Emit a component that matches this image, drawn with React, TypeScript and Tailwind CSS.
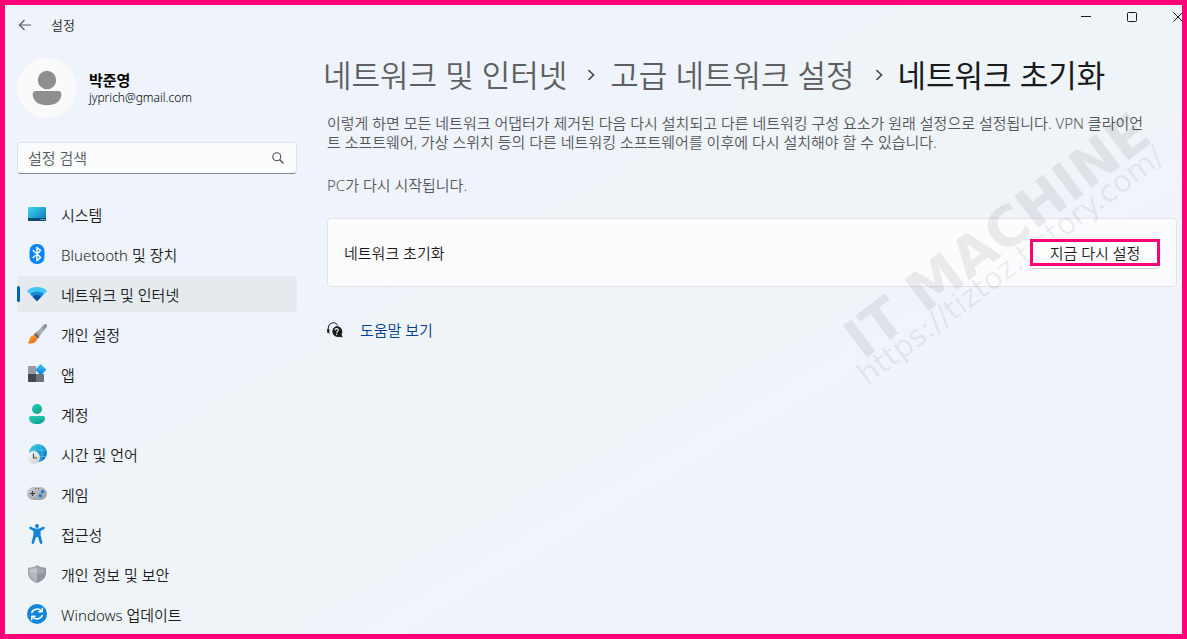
import React from 'react';
import type { ReactNode } from 'react';

function SystemIcon() {
  return (
    <svg viewBox="0 0 20 20" className="w-5 h-5 shrink-0" aria-hidden="true">
      <defs>
        <linearGradient id="sys" x1="0" y1="0" x2="1" y2="1">
          <stop offset="0" stopColor="#3fd8ea" />
          <stop offset="1" stopColor="#0c72c4" />
        </linearGradient>
      </defs>
      <rect x="1" y="3" width="18" height="14" rx="1.2" fill="url(#sys)" />
      <path d="M1 14h18v1.8a1.2 1.2 0 0 1-1.2 1.2H2.2A1.2 1.2 0 0 1 1 15.8z" fill="#0b4a6f" />
      <path d="M13.5 15.5h1M15.5 15.5h1M17.2 15.5h.8" stroke="#b9e4f5" strokeWidth="1" />
    </svg>);

}

function BluetoothIcon() {
  return (
    <svg viewBox="0 0 20 20" className="w-5 h-5 shrink-0" aria-hidden="true">
      <rect x="2.500" y="0" width="15" height="20" rx="7" fill="#0a84fb" />
      <path
        d="M6.200 6.400l7.400 7-3.700 3.200V3.400l3.700 3.200-7.400 7"
        fill="none"
        stroke="#fff"
        strokeWidth="1.400"
        strokeLinejoin="round"
        strokeLinecap="round" />

    </svg>);

}

function WifiIcon() {
  return (
    <svg viewBox="0 0 20 20" className="w-5 h-5 shrink-0" aria-hidden="true">
      <path d="M10 17L.4 7.400C.1 7 .1 6.600.5 6.200 5.800 1.900 14.200 1.900 19.500 6.200c.4.4.4.8.1 1.200z" fill="#3fc8f4" />
      <path d="M3.300 10.300C7 6.600 13 6.600 16.700 10.300L10 17z" fill="#1689d3" />
      <path d="M10 17.200L5.900 13C8.200 10.400 11.800 10.400 14.100 13z" fill="#0b4f9f" />
    </svg>);

}

function BrushIcon() {
  return (
    <svg viewBox="0 0 20 20" className="w-5 h-5 shrink-0" aria-hidden="true">
      <defs>
        <linearGradient id="handle" x1="1" y1="0" x2="0" y2="1">
          <stop offset="0" stopColor="#7d8187" />
          <stop offset="0.5" stopColor="#b4b8bd" />
          <stop offset="1" stopColor="#6c7076" />
        </linearGradient>
        <linearGradient id="tip" x1="0" y1="0" x2="0.6" y2="1">
          <stop offset="0" stopColor="#ffb13d" />
          <stop offset="1" stopColor="#ea6a10" />
        </linearGradient>
      </defs>
      <path d="M19.500.6c.8.8.5 1.800-.2 2.800L11 14.200 7 10.500 16.700.9c1-.9 2-1.100 2.800-.3z" fill="url(#handle)" />
      <path d="M8.300 9.200l3.800 3.700-1.500 1.900-4-3.900z" fill="#5d6167" />
      <path d="M6.400 11.200c1.900-.2 4.100 1.700 3.500 4.200-.8 3.900-6.400 4.800-9.400 3.500 1.800-.7 1.700-1.700 2.100-3.600.4-2.300 1.800-3.900 3.800-4.100z" fill="url(#tip)" />
    </svg>);

}

function AppsIcon() {
  return (
    <svg viewBox="0 0 20 20" className="w-5 h-5 shrink-0" aria-hidden="true">
      <defs>
        <linearGradient id="diamond" x1="0" y1="0" x2="1" y2="1">
          <stop offset="0" stopColor="#41c4f8" />
          <stop offset="1" stopColor="#0a76d8" />
        </linearGradient>
      </defs>
      <path d="M2 2h7v8H1V3a1 1 0 0 1 1-1z" fill="#949ba4" />
      <path d="M1 10h8v8H2a1 1 0 0 1-1-1z" fill="#43474c" />
      <path d="M9 10h8v7a1 1 0 0 1-1 1H9z" fill="#6d737b" />
      <rect x="9.700" y="1.700" width="8" height="8" rx="0.8" fill="url(#diamond)" transform="rotate(45 13.700 5.700)" />
    </svg>);

}

function AccountIcon() {
  return (
    <svg viewBox="0 0 20 20" className="w-5 h-5 shrink-0" aria-hidden="true">
      <defs>
        <linearGradient id="acc" x1="0" y1="0" x2="0.6" y2="1">
          <stop offset="0" stopColor="#25d0b4" />
          <stop offset="1" stopColor="#10a394" />
        </linearGradient>
      </defs>
      <circle cx="10" cy="5" r="5" fill="url(#acc)" />
      <path d="M4 12h12a2 2 0 0 1 2 2c0 4-3.600 6-8 6s-8-2-8-6a2 2 0 0 1 2-2z" fill="url(#acc)" />
    </svg>);

}

function TimeIcon() {
  return (
    <svg viewBox="0 0 20 20" className="w-5 h-5 shrink-0" aria-hidden="true">
      <defs>
        <linearGradient id="globe" x1="0" y1="0" x2="1" y2="1">
          <stop offset="0" stopColor="#38d0e0" />
          <stop offset="1" stopColor="#0a68c4" />
        </linearGradient>
        <linearGradient id="clock" x1="0" y1="0" x2="1" y2="1">
          <stop offset="0" stopColor="#fbfbfb" />
          <stop offset="1" stopColor="#cdced0" />
        </linearGradient>
      </defs>
      <circle cx="11" cy="9" r="9" fill="url(#globe)" />
      <g fill="none" stroke="#5ccdea" strokeWidth="0.7">
        <ellipse cx="11" cy="9" rx="4" ry="9" />
        <path d="M3 6h16M2.500 12.500h17" />
      </g>
      <circle cx="6.500" cy="13.500" r="6.500" fill="url(#clock)" />
      <path d="M6.500 9.500v4.500h3.500" fill="none" stroke="#4a4d51" strokeWidth="1.200" />
    </svg>);

}

function GameIcon() {
  return (
    <svg viewBox="0 0 20 20" className="w-5 h-5 shrink-0" aria-hidden="true">
      <defs>
        <linearGradient id="pad" x1="0" y1="0" x2="1" y2="1">
          <stop offset="0" stopColor="#ced1d5" />
          <stop offset="1" stopColor="#9399a1" />
        </linearGradient>
      </defs>
      <rect x="0" y="3" width="20" height="13" rx="6.500" fill="url(#pad)" />
      <path d="M5.500 7v5M3 9.500h5" stroke="#3a3d41" strokeWidth="1.200" />
      <path d="M8.200 4.700h1M11 4.700h1" stroke="#3a3d41" strokeWidth="1" />
      <circle cx="15.500" cy="7.700" r="1.600" fill="#1273d0" />
      <circle cx="13.300" cy="11.700" r="1.600" fill="#1273d0" />
    </svg>);

}

function AccessibilityIcon() {
  return (
    <svg viewBox="0 0 20 20" className="w-5 h-5 shrink-0" aria-hidden="true">
      <circle cx="10" cy="2" r="2" fill="#1683d8" />
      <path
        d="M2.300 3.200c.4-.6 1.100-.7 1.800-.4C6 3.900 7.800 4.800 10 4.800s4-.9 5.900-2c.7-.3 1.400-.2 1.800.4.3.7 0 1.300-.6 1.700L13.600 7v4l1.800 7.300c.1.8-.2 1.400-.9 1.600-.8.2-1.400-.2-1.600-.9L10.900 13h-1.800L7.100 19c-.2.7-.8 1.100-1.600.9-.7-.2-1-.8-.9-1.600L6.400 11V7L2.900 4.900c-.6-.4-.9-1-.6-1.700z"
        fill="#1683d8" />

    </svg>);

}

function ShieldIcon() {
  return (
    <svg viewBox="0 0 20 20" className="w-5 h-5 shrink-0" aria-hidden="true">
      <path d="M10 1c2.500 1.800 5 2.600 9 2.700v5.500c0 4.300-3.500 7.700-9 9.800z" fill="#8f959c" />
      <path d="M10 1C7.500 2.800 5 3.600 1 3.700v5.500c0 4.300 3.500 7.700 9 9.800z" fill="#9da2a8" />
      <path d="M10 2.700c2.300 1.500 4.500 2.100 7.600 2.300v4.500H10z" fill="#a2a7ad" />
      <path d="M10 2.700C7.700 4.200 5.500 4.800 2.400 5v4.500H10z" fill="#c0c4c8" />
      <path d="M10 9.500h7.600c-.2 3.500-3 6.100-7.600 8z" fill="#90969d" />
      <path d="M10 9.500H2.400c.2 3.500 3 6.100 7.600 8z" fill="#b3b7bb" />
    </svg>);

}

function UpdateIcon() {
  return (
    <svg viewBox="0 0 20 20" className="w-5 h-5 shrink-0" aria-hidden="true">
      <circle cx="10" cy="10" r="10" fill="#0f86dc" />
      <g fill="none" stroke="#fff" strokeWidth="1.500" strokeLinecap="round" strokeLinejoin="round">
        <path d="M4.800 8.500C6.200 4.800 11.500 3.700 14.700 7.200" />
        <path d="M15.300 4.200v3.500h-3.500" />
        <path d="M15.200 11.500c-1.400 3.700-6.700 4.800-9.900 1.300" />
        <path d="M4.700 15.800v-3.500h3.500" />
      </g>
    </svg>);

}

function HelpIcon() {
  return (
    <svg viewBox="0 0 16 16" className="w-4 h-4 shrink-0" aria-hidden="true">
      <path d="M1.200 8V6.200C1.400 3 3.300.8 6.200.8c2 0 3.700 1 4.700 2.700" fill="none" stroke="#1b1b1b" strokeWidth="1" />
      <path d="M.3 7.300h1.800v3.200H.3zM1.500 10.500l1.200 1.400" fill="#1b1b1b" stroke="#1b1b1b" strokeWidth="0.6" />
      <path d="M9.600 3.900a5.600 5.600 0 0 1 4.900 8.400l1.200 3.300-3.400-.8A5.600 5.600 0 1 1 9.600 3.900z" fill="#1b1b1b" />
      <path d="M8 8.200c0-2.200 3.300-2.100 3.300-.1 0 1.300-1.600 1.300-1.600 2.700" fill="none" stroke="#fff" strokeWidth="1.100" />
      <circle cx="9.700" cy="12.300" r="0.7" fill="#fff" />
    </svg>);

}

function Separator() {
  return (
    <svg viewBox="0 0 10 12" className="ml-[19px] mr-[14px] w-[10px] h-3 shrink-0" aria-hidden="true">
      <path d="M2.500 1.200L7.500 6l-5 4.800" fill="none" stroke="#4d4f52" strokeWidth="1.700" />
    </svg>);

}

const navItems: {label: string;icon: ReactNode;active?: boolean;}[] = [
{ label: '시스템', icon: <SystemIcon /> },
{ label: 'Bluetooth 및 장치', icon: <BluetoothIcon /> },
{ label: '네트워크 및 인터넷', icon: <WifiIcon />, active: true },
{ label: '개인 설정', icon: <BrushIcon /> },
{ label: '앱', icon: <AppsIcon /> },
{ label: '계정', icon: <AccountIcon /> },
{ label: '시간 및 언어', icon: <TimeIcon /> },
{ label: '게임', icon: <GameIcon /> },
{ label: '접근성', icon: <AccessibilityIcon /> },
{ label: '개인 정보 및 보안', icon: <ShieldIcon /> },
{ label: 'Windows 업데이트', icon: <UpdateIcon /> }];


function TitleBar() {
  return (
    <header className="flex h-10 items-center pl-3">
      <button aria-label="뒤로" className="flex w-4 h-4 items-center justify-center">
        <svg viewBox="0 0 14 12" className="w-[14px] h-3" aria-hidden="true">
          <path d="M13 6H1.500M6.500 1l-5 5 5 5" fill="none" stroke="#5b5d60" strokeWidth="1.200" />
        </svg>
      </button>
      <span className="ml-[18px] pt-0.5 text-[13px] text-[#1b1b1b]">설정</span>
      <div className="ml-auto -mr-[19px] flex self-start">
        <button aria-label="최소화" className="flex w-[46px] h-6 items-center justify-center">
          <svg viewBox="0 0 10 10" className="w-[10px] h-[10px]" aria-hidden="true">
            <path d="M0 4.500h10" stroke="#1b1b1b" />
          </svg>
        </button>
        <button aria-label="최대화" className="flex w-[46px] h-6 items-center justify-center">
          <svg viewBox="0 0 10 10" className="w-[10px] h-[10px]" aria-hidden="true">
            <rect x="0.5" y="0.5" width="9" height="9" rx="1" fill="none" stroke="#1b1b1b" />
          </svg>
        </button>
        <button aria-label="닫기" className="flex w-[46px] h-6 items-center justify-center">
          <svg viewBox="0 0 10 10" className="w-[10px] h-[10px]" aria-hidden="true">
            <path d="M.3.3l9.400 9.400M9.700.3L.3 9.700" stroke="#1b1b1b" />
          </svg>
        </button>
      </div>
    </header>);

}

function Sidebar() {
  return (
    <aside className="w-[280px] shrink-0 pt-[13px]">
      <div className="flex items-center gap-3">
        <svg viewBox="0 0 60 60" className="w-[60px] h-[60px] shrink-0" aria-hidden="true">
          <circle cx="30" cy="30" r="30" fill="#fafafa" />
          <circle cx="30" cy="22" r="9.200" fill="#8f8f8f" />
          <path d="M19 33h22a3.300 3.300 0 0 1 3.300 3.300C44.300 43.500 38 47.300 30 47.300s-14.300-3.800-14.300-11A3.300 3.300 0 0 1 19 33z" fill="#8f8f8f" />
        </svg>
        <div className="pt-0.5">
          <div className="text-[15px] leading-[18px] font-bold text-black">박준영</div>
          <div className="text-[12px] leading-[18px] text-black">jyprich@gmail.com</div>
        </div>
      </div>

      {/* Search */}
      <div className="mt-6 flex h-8 items-center rounded border border-[#dfe3e8] border-b-[#85888c] bg-[#fbfcfe] pl-[10px] pr-3">
        <input
          type="text"
          aria-label="설정 검색"
          placeholder="설정 검색"
          className="min-w-0 flex-1 bg-transparent text-[15px] text-[#1b1b1b] placeholder:text-[#55575a] outline-none" />

        <svg viewBox="0 0 12 12" className="w-3 h-3 shrink-0" aria-hidden="true">
          <circle cx="4.800" cy="4.800" r="4" fill="none" stroke="#4b4d50" strokeWidth="1.100" />
          <path d="M7.700 7.700l3.800 3.800" stroke="#4b4d50" strokeWidth="1.300" />
        </svg>
      </div>

      <nav className="mt-[22px] flex flex-col gap-1">
        {navItems.map((item) =>
        <a
          key={item.label}
          href="#"
          aria-current={item.active ? 'page' : undefined}
          className={
          item.active ?
          'relative flex h-9 items-center gap-[14px] rounded bg-[#e5eaee] pl-[10px] text-[15px] text-[#1b1b1b]' :
          'relative flex h-9 items-center gap-[14px] rounded pl-[10px] text-[15px] text-[#1b1b1b]'
          }>

            {item.active &&
          <span className="absolute left-0 top-[10px] h-4 w-[3px] rounded-full bg-[#0061b8]" />
          }
            {item.icon}
            <span className="pt-0.5">{item.label}</span>
          </a>
        )}
      </nav>
    </aside>);

}

function Watermark() {
  return (
    <div
      aria-hidden="true"
      className="pointer-events-none absolute right-[-5px] top-[208px] origin-center -rotate-[37deg] whitespace-nowrap font-['DejaVu_Sans'] text-black/7">

      <div className="text-[55px] leading-[40px] font-bold">IT MACHINE</div>
      <div className="-ml-3 text-[30px] leading-[24px] font-normal">https://tiztoz.tistory.com/</div>
    </div>);

}

export default function App() {
  return (
    <div className="relative min-h-screen overflow-hidden border-[5px] border-[#ff0078] bg-[linear-gradient(150deg,#eff3fb_0%,#eff3fb_35%,#eff4f8_42%,#eff4f8_58%,#f0f3fb_66%,#f0f3fa_100%)] font-['Noto_Sans','Noto_Sans_CJK_KR',sans-serif] font-[350]">
      <TitleBar />
      <div className="flex gap-[30px] pl-3 pr-[5px]">
        <Sidebar />
        <main className="min-w-0 flex-1 pt-[10px]">
          <h1 className="-ml-1 flex h-10 items-center whitespace-nowrap text-[31px] font-[350]">
            <a href="#" className="text-[#5d5f62]">네트워크 및 인터넷</a>
            <Separator />
            <a href="#" className="text-[#5d5f62]">고급 네트워크 설정</a>
            <Separator />
            <span className="font-normal text-[#1b1b1b]">네트워크 초기화</span>
          </h1>

          <div className="mt-[19px] text-[15px] leading-[19px] text-[#55575a]">
            <p>
              이렇게 하면 모든 네트워크 어댑터가 제거된 다음 다시 설치되고 다른 네트워킹 구성 요소가 원래 설정으로 설정됩니다. VPN 클라이언
              <br />
              트 소프트웨어, 가상 스위치 등의 다른 네트워킹 소프트웨어를 이후에 다시 설치해야 할 수 있습니다.
            </p>
            <p className="mt-6">PC가 다시 시작됩니다.</p>
          </div>

          <section className="mt-[23px] flex h-[69px] items-center justify-between rounded border border-[#e0e4e9] bg-[#fcfcfe] px-4">
            <span className="pt-0.5 text-[15px] text-[#1b1b1b]">네트워크 초기화</span>
            <button className="relative z-10 h-8 w-[130px] rounded border border-[#e6e8ea] border-b-[#cfd1d3] bg-[#fefefe] pt-0.5 text-[15px] text-[#1b1b1b]">
              지금 다시 설정
              <span className="absolute -inset-x-px top-px bottom-[2px] border-[3px] border-[#ff0078]" />
            </button>
          </section>

          <a href="#" className="mt-[33px] flex h-5 w-fit items-center gap-[17px] text-[15px] text-[#003e92]">
            <HelpIcon />
            도움말 보기
          </a>
        </main>
      </div>
      <Watermark />
    </div>);

}
